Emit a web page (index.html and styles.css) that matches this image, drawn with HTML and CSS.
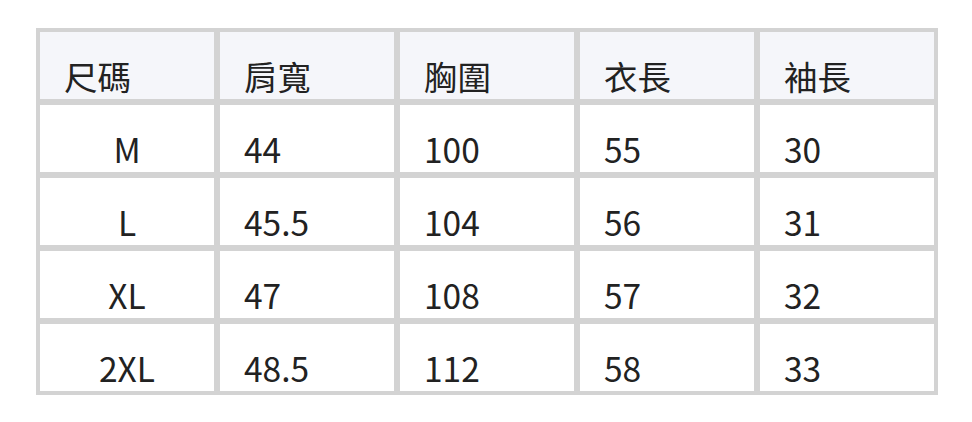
FILE: index.html
```html
<!DOCTYPE html>
<html lang="zh-Hant">
<head>
<meta charset="utf-8">
<link rel="stylesheet" href="styles.css">
</head>
<body>
<div class="table">
  <div class="cell head">尺碼</div>
  <div class="cell head">肩寬</div>
  <div class="cell head">胸圍</div>
  <div class="cell head">衣長</div>
  <div class="cell head">袖長</div>

  <div class="cell size">M</div>
  <div class="cell">44</div>
  <div class="cell">100</div>
  <div class="cell">55</div>
  <div class="cell">30</div>

  <div class="cell size">L</div>
  <div class="cell">45.5</div>
  <div class="cell">104</div>
  <div class="cell">56</div>
  <div class="cell">31</div>

  <div class="cell size">XL</div>
  <div class="cell">47</div>
  <div class="cell">108</div>
  <div class="cell">57</div>
  <div class="cell">32</div>

  <div class="cell size">2XL</div>
  <div class="cell">48.5</div>
  <div class="cell">112</div>
  <div class="cell">58</div>
  <div class="cell">33</div>
</div>
</body>
</html>
```
FILE: styles.css
```css
html, body {
  margin: 0;
  padding: 0;
  background: #ffffff;
}
body {
  padding: 28px 0 0 36px;
  font-family: "Noto Sans CJK TC", "Noto Sans", sans-serif;
  color: #222222;
}
.table {
  display: grid;
  grid-template-columns: repeat(5, 174px);
  grid-auto-rows: 67px;
  gap: 6px;
  padding: 4px;
  width: max-content;
  background: #d3d3d3;
}
.cell {
  background: #ffffff;
  font-size: 33.5px;
  line-height: 1;
  padding: 0 0 7px 24px;
  display: flex;
  align-items: flex-end;
}
.head {
  background: #f5f6fa;
}
.size {
  justify-content: center;
  padding-left: 0;
}
```
